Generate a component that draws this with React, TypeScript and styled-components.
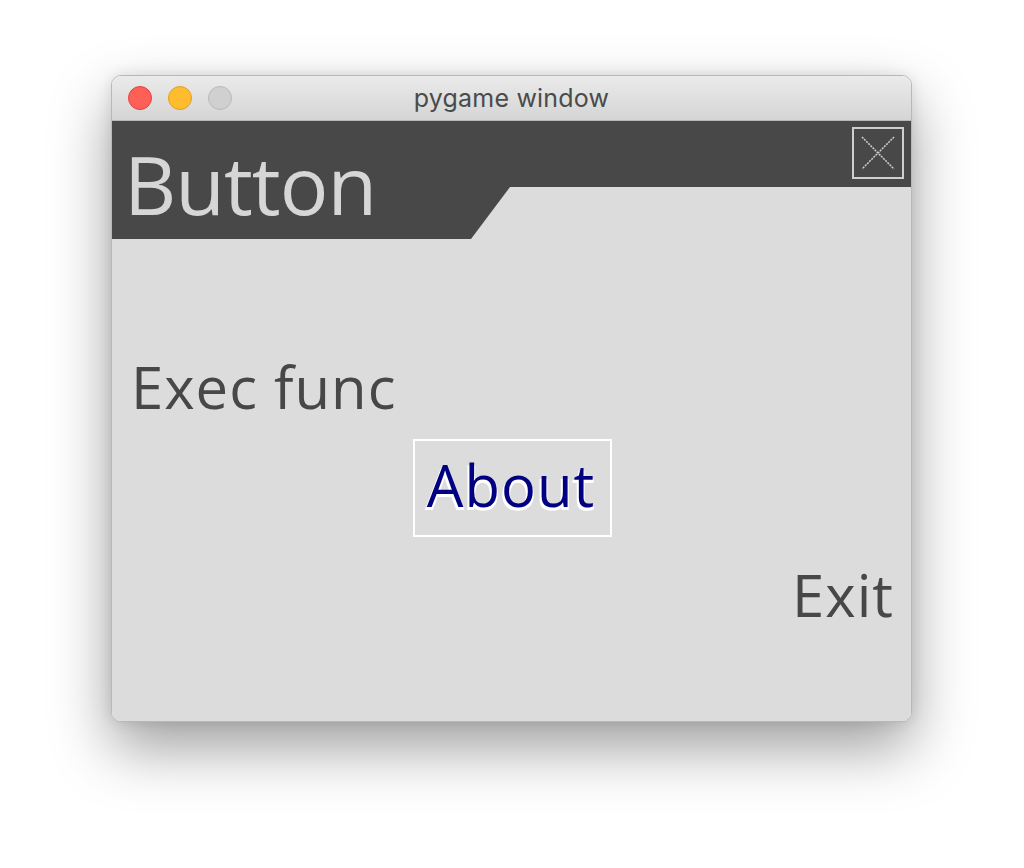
import React from "react";
import styled, { createGlobalStyle } from "styled-components";

const Global = createGlobalStyle`
  html, body { margin: 0; padding: 0; background: #ffffff; }
  body { width: 1024px; height: 868px; overflow: hidden; }
`;

const Page = styled.div`
  display: flex;
  align-items: flex-start;
  padding: 75px 0 0 111px;
  box-sizing: border-box;
  width: 1024px;
  height: 868px;
`;

const Window = styled.div`
  width: 801px;
  display: flex;
  flex-direction: column;
  border-radius: 10px;
  overflow: hidden;
  border: 1px solid rgba(0, 0, 0, 0.28);
  box-sizing: border-box;
  box-shadow: 0 26px 60px rgba(0, 0, 0, 0.38), 0 0 14px rgba(0, 0, 0, 0.1);
`;

const TitleBar = styled.div`
  position: relative;
  height: 44px;
  display: flex;
  align-items: center;
  justify-content: center;
  background: linear-gradient(#ebebeb, #d5d5d5);
  border-bottom: 1px solid #b8b8b8;
`;

const Lights = styled.div`
  position: absolute;
  left: 16px;
  top: 10px;
  display: flex;
  gap: 16px;
`;

const Light = styled.span<{ $fill: string; $edge: string }>`
  width: 22px;
  height: 22px;
  border-radius: 50%;
  background: ${(p) => p.$fill};
  border: 1px solid ${(p) => p.$edge};
`;

const WindowTitle = styled.span`
  font-family: Inter, "Open Sans", sans-serif;
  font-size: 25px;
  color: #4b4b4b;
  letter-spacing: 0.2px;
`;

const Surface = styled.div`
  width: 800px;
  height: 600px;
  background: #dcdcdc;
  display: flex;
  flex-direction: column;
`;

const Header = styled.div`
  position: relative;
  height: 118px;
  display: flex;
  align-items: flex-start;
  justify-content: space-between;
  &::before {
    content: "";
    position: absolute;
    inset: 0;
    background: #484848;
    clip-path: polygon(0 0, 100% 0, 100% 66px, 398px 66px, 359px 118px, 0 118px);
  }
`;

const MenuTitle = styled.span`
  position: relative;
  font-family: "Open Sans", sans-serif;
  font-size: 81px;
  line-height: 1;
  letter-spacing: -1px;
  color: #d6d6d6;
  margin: 22px 0 0 12px;
`;

const CloseButton = styled.div`
  position: relative;
  width: 52px;
  height: 52px;
  box-sizing: border-box;
  border: 2px solid #cfcfcf;
  margin: 6px 8px 0 0;
  svg { display: block; }
`;

const Items = styled.div`
  display: flex;
  flex-direction: column;
  padding-top: 109px;
  font-family: "Open Sans", sans-serif;
`;

const Item = styled.div<{ $align: "flex-start" | "center" | "flex-end"; $mr?: number; $ml?: number }>`
  align-self: ${(p) => p.$align};
  font-size: 58px;
  line-height: 78px;
  letter-spacing: 1px;
  color: #474747;
  margin-left: ${(p) => p.$ml ?? 0}px;
  margin-right: ${(p) => p.$mr ?? 0}px;
`;

const Selected = styled.div`
  align-self: center;
  margin-top: 13px;
  margin-bottom: 19px;
  width: 199px;
  height: 98px;
  box-sizing: border-box;
  border: 2px solid #ffffff;
  display: flex;
  justify-content: center;
  padding: 5px 2px 0 0;
  font-size: 58px;
  line-height: 78px;
  letter-spacing: 1px;
  color: #000080;
  text-shadow: -2px 3px 0 #ffffff, 1px 3px 0 #ffffff;
`;

export default function App() {
  return (
    <>
      <Global />
      <Page>
        <Window>
          <TitleBar>
            <Lights>
              <Light $fill="#fe5f57" $edge="#e0443e" />
              <Light $fill="#febc2e" $edge="#dea123" />
              <Light $fill="#d0d0d0" $edge="#b9b9b9" />
            </Lights>
            <WindowTitle>pygame window</WindowTitle>
          </TitleBar>
          <Surface>
            <Header>
              <MenuTitle>Button</MenuTitle>
              <CloseButton>
                <svg width="48" height="48" viewBox="0 0 48 48">
                  <path d="M8 8 L40 40 M40 8 L8 40" stroke="#cfcfcf" strokeWidth="1.5" strokeDasharray="2 1" />
                </svg>
              </CloseButton>
            </Header>
            <Items>
              <Item $align="flex-start" $ml={19}>Exec func</Item>
              <Selected>About</Selected>
              <Item $align="flex-end" $mr={18}>Exit</Item>
            </Items>
          </Surface>
        </Window>
      </Page>
    </>
  );
}
